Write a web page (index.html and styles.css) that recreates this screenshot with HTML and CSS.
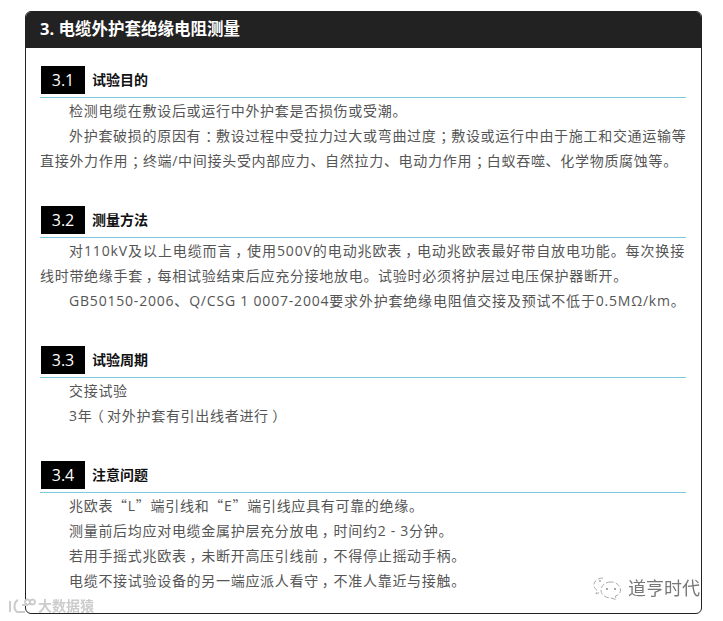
FILE: index.html
```html
<!DOCTYPE html>
<html lang="zh-CN">
<head>
<meta charset="utf-8">
<title>电缆外护套绝缘电阻测量</title>
<link rel="stylesheet" href="styles.css">
</head>
<body>
<main class="card">
  <h1 class="card-title">3. 电缆外护套绝缘电阻测量</h1>
  <div class="card-body">
    <section class="sec">
      <h2 class="sec-head"><span class="badge">3.1</span><span class="sec-name">试验目的</span></h2>
      <p class="ind">检测电缆在敷设后或运行中外护套是否损伤或受潮。</p>
      <p><span class="line ind">外护套破损的原因有<span class="pu">：</span>敷设过程中受拉力过大或弯曲过度<span class="pu">；</span>敷设或运行中由于施工和交通运输等</span><span class="line">直接外力作用<span class="pu">；</span>终端/中间接头受内部应力、自然拉力、电动力作用<span class="pu">；</span>白蚁吞噬、化学物质腐蚀等。</span></p>
    </section>
    <section class="sec">
      <h2 class="sec-head"><span class="badge">3.2</span><span class="sec-name">测量方法</span></h2>
      <p><span class="line ind wide">对110kV及以上电缆而言<span class="pu">，</span>使用500V的电动兆欧表<span class="pu">，</span>电动兆欧表最好带自放电功能。每次换接</span><span class="line">线时带绝缘手套<span class="pu">，</span>每相试验结束后应充分接地放电。试验时必须将护层过电压保护器断开。</span></p>
      <p class="ind wider">GB50150-2006、Q/CSG 1 0007-2004要求外护套绝缘电阻值交接及预试不低于0.5MΩ/km。</p>
    </section>
    <section class="sec">
      <h2 class="sec-head"><span class="badge">3.3</span><span class="sec-name">试验周期</span></h2>
      <p class="ind">交接试验</p>
      <p class="ind">3年<span class="pu">（</span>对外护套有引出线者进行<span class="pu">）</span></p>
    </section>
    <section class="sec">
      <h2 class="sec-head"><span class="badge">3.4</span><span class="sec-name">注意问题</span></h2>
      <p class="ind">兆欧表<span class="cjk">“</span>L<span class="cjk">”</span>端引线和<span class="cjk">“</span>E<span class="cjk">”</span>端引线应具有可靠的绝缘。</p>
      <p class="ind">测量前后均应对电缆金属护层充分放电<span class="pu">，</span>时间约2 - 3分钟。</p>
      <p class="ind">若用手摇式兆欧表<span class="pu">，</span>未断开高压引线前<span class="pu">，</span>不得停止摇动手柄。</p>
      <p class="ind">电缆不接试验设备的另一端应派人看守<span class="pu">，</span>不准人靠近与接触。</p>
    </section>
  </div>
</main>
<div class="mark-left"><svg class="mark-icon" viewBox="0 0 30 18" width="30" height="18"><path d="M3 4v11M11 3c-4 2-5 9-1 12h8M15 8h6M23 5a2.500 2.500 0 1 0 0 .1M28 5a2.500 2.500 0 1 0 0 .1" fill="none" stroke="#ccc" stroke-width="2"/></svg><span>大数据猿</span></div>
<div class="mark-right"><svg class="mark-icon" viewBox="0 0 32 26" width="32" height="26"><g fill="none" stroke="#a8a8a8" stroke-width="1" stroke-dasharray="5 2"><path d="M11 3c-5 0-9 3-9 7 0 2 1 4 3 5l-1 4 4-2"/><path d="M19 7c-6 0-10 4-10 8s4 8 10 8l5 1.500-.5-3.500c3-1 5-3 5-6 0-4-4-8-9.500-8z"/></g><circle cx="15" cy="14" r="1" fill="#888"/><circle cx="23" cy="14" r="1" fill="#888"/><circle cx="8" cy="6" r="1" fill="#aaa"/></svg><span>道亨时代</span></div>
</body>
</html>
```
FILE: styles.css
```css
html, body { margin: 0; padding: 0; background: #fff; }
body {
  position: relative;
  width: 723px;
  height: 621px;
  overflow: hidden;
  padding-top: 11px;
  box-sizing: border-box;
  font-family: "Open Sans", "Noto Sans CJK SC", sans-serif;
}
.card {
  box-sizing: border-box;
  width: 677px;
  height: 603px;
  margin-left: 25px;
  border: 1px solid #222;
  border-radius: 6px;
  overflow: hidden;
}
.card-title {
  margin: 0;
  height: 36px;
  padding-left: 14px;
  background: #222;
  color: #fff;
  font-size: 16.5px;
  font-weight: 700;
  line-height: 34px;
}
.card-body { padding: 18px 15px 0 14px; }
.sec { margin-bottom: 33px; }
.sec-head {
  display: flex;
  align-items: center;
  gap: 7px;
  margin: 0;
  padding-bottom: 3px;
  border-bottom: 1px solid #7cc8dc;
  height: 28px;
  font-size: 14px;
}
.badge {
  width: 44px;
  height: 28px;
  margin-left: 1px;
  background: #000;
  color: #fff;
  font: 400 16px/28px "Open Sans", sans-serif;
  text-align: center;
}
.sec-name { color: #111; font-weight: 700; line-height: 28px; height: 28px; }
p {
  margin: 0;
  font-size: 14px;
  line-height: 25px;
  color: #555;
  letter-spacing: 0.7px;
  white-space: nowrap;
}
.line { display: block; }
.wide { letter-spacing: 0.9px; }
.wider { letter-spacing: 0.8px; }
.cjk { font-family: "Noto Sans CJK SC", sans-serif; }
.pu {
  display: inline-block;
  width: 14.7px;
  font-family: "Noto Sans CJK SC", sans-serif;
  font-feature-settings: "palt";
  letter-spacing: 0;
  text-align: center;
  text-indent: 0;
}
.ind { text-indent: 29px; }
.mark-icon { flex: none; }
.mark-left {
  position: absolute;
  left: 7px;
  top: 596px;
  display: flex;
  align-items: center;
  gap: 1px;
  color: #ccc;
  font-size: 14px;
  font-weight: 700;
  line-height: 20px;
  filter: blur(0.5px);
}
.mark-right {
  position: absolute;
  left: 592px;
  top: 575px;
  display: flex;
  align-items: center;
  gap: 4px;
  color: #777;
  font-size: 18px;
  line-height: 26px;
  filter: blur(0.3px);
}
```
